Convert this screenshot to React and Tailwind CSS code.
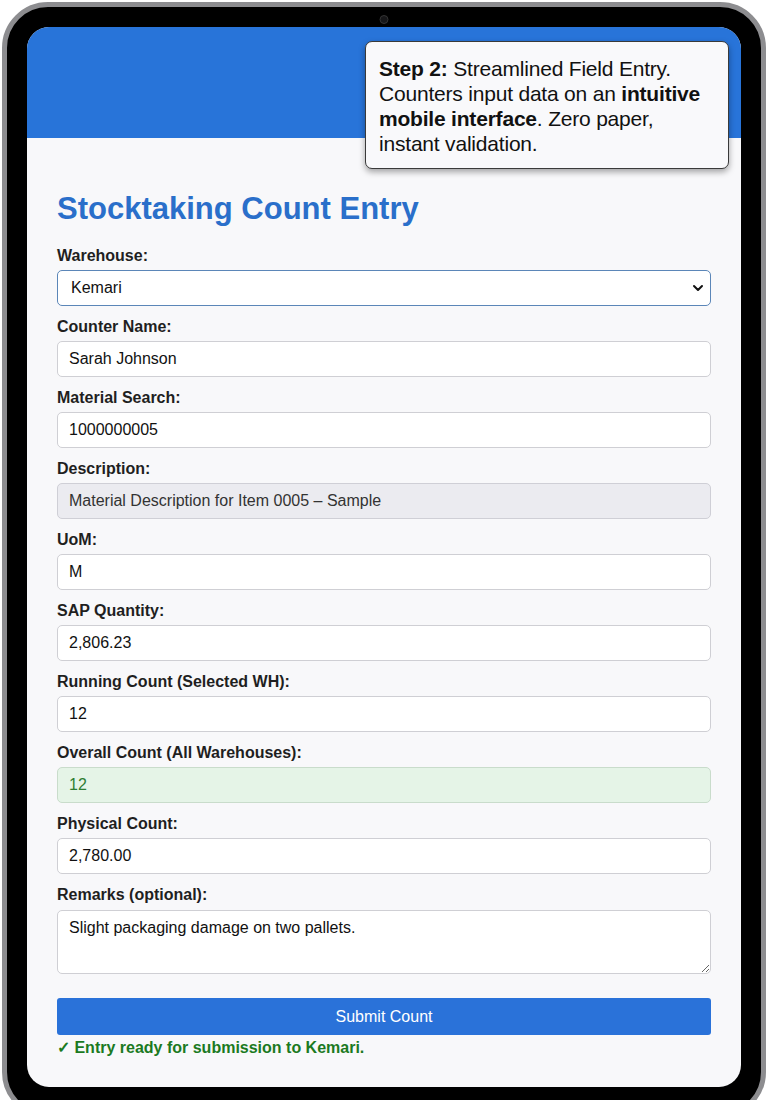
import { ChevronDown } from "lucide-react";

const fields = [
  { label: "Counter Name:", value: "Sarah Johnson" },
  { label: "Material Search:", value: "1000000005" },
  { label: "Description:", value: "Material Description for Item 0005 – Sample", tone: "muted" },
  { label: "UoM:", value: "M" },
  { label: "SAP Quantity:", value: "2,806.23" },
  { label: "Running Count (Selected WH):", value: "12" },
  { label: "Overall Count (All Warehouses):", value: "12", tone: "ok" },
  { label: "Physical Count:", value: "2,780.00" },
];

const inputTones = {
  muted: "bg-[#ebebf0] border-[#cfcfd6] text-[#333]",
  ok: "bg-[#e5f4e7] border-[#c9dccb] text-[#2e7d32]",
  default: "bg-white border-[#cfcfd4] text-[#111]",
};

function Field({ label, children }) {
  return (
    <div className="flex flex-col gap-[5px]">
      <label className="text-[16px] leading-[18px] font-bold text-[#1f1f1f]">{label}</label>
      {children}
    </div>
  );
}

function TextField({ label, value, tone = "default" }) {
  return (
    <Field label={label}>
      <input
        readOnly
        value={value}
        className={`h-[36px] w-full rounded-[5px] border px-[11px] text-[16px] outline-none ${inputTones[tone]}`}
      />
    </Field>
  );
}

export default function App() {
  return (
    <div className="h-[1100px] w-[768px] overflow-hidden bg-white" style={{ fontFamily: '"Liberation Sans", Arial, sans-serif' }}>
      {/* device frame */}
      <div className="relative ml-[2px] mt-[2px] h-[1116px] w-[764px] rounded-[46px] border-[5px] border-[#8d8d90] bg-black p-[20px]">
        <div className="absolute left-1/2 top-[8px] h-[9px] w-[9px] -translate-x-1/2 rounded-full border border-[#333] bg-[#161618]" />

        {/* screen */}
        <div className="relative h-[1060px] w-[714px] overflow-hidden rounded-[22px] bg-[#f8f8fa]">
          <div className="h-[111px] bg-[#2874d9]" />

          <div className="absolute left-[338px] top-[14px] w-[364px] rounded-[7px] border border-[#3a3a3a] bg-[#f9f9fb] px-[13px] pt-[14px] pb-[12px] text-[21px] leading-[25px] tracking-[-0.2px] text-[#111] shadow-[0_3px_6px_rgba(0,0,0,0.35)]">
            <b>Step 2:</b> Streamlined Field Entry. Counters input data on an <b>intuitive mobile interface</b>. Zero paper, instant validation.
          </div>

          <div className="flex flex-col px-[30px] pt-[52px]">
            <h1 className="text-[31px] leading-[38px] font-bold text-[#2a6fca]">Stocktaking Count Entry</h1>

            <div className="mt-[19px] flex flex-col gap-[12px]">
              <Field label="Warehouse:">
                <div className="relative">
                  <select
                    defaultValue="Kemari"
                    className="h-[36px] w-full appearance-none rounded-[5px] border-[1.5px] border-[#5b86b8] bg-white px-[13px] text-[16px] text-[#111] outline-none"
                  >
                    <option>Kemari</option>
                    <option>Port Qasim</option>
                  </select>
                  <ChevronDown size={16} strokeWidth={3} className="pointer-events-none absolute right-[5px] top-[10px] text-[#111]" />
                </div>
              </Field>

              {fields.map((f) => (
                <TextField key={f.label} {...f} />
              ))}

              <Field label="Remarks (optional):">
                <textarea
                  readOnly
                  value="Slight packaging damage on two pallets."
                  className="mt-[1px] h-[64px] w-full rounded-[5px] border border-[#cfcfd4] bg-white px-[11px] py-[7px] text-[16px] leading-[20px] text-[#111] outline-none"
                />
              </Field>
            </div>

            <button className="mt-[24px] h-[37px] w-full rounded-[3px] bg-[#2a72d9] text-[16px] text-white">Submit Count</button>
            <p className="mt-[4px] text-[16px] leading-[18px] font-bold text-[#1b7a1f]">✓ Entry ready for submission to Kemari.</p>
          </div>
        </div>
      </div>
    </div>
  );
}
